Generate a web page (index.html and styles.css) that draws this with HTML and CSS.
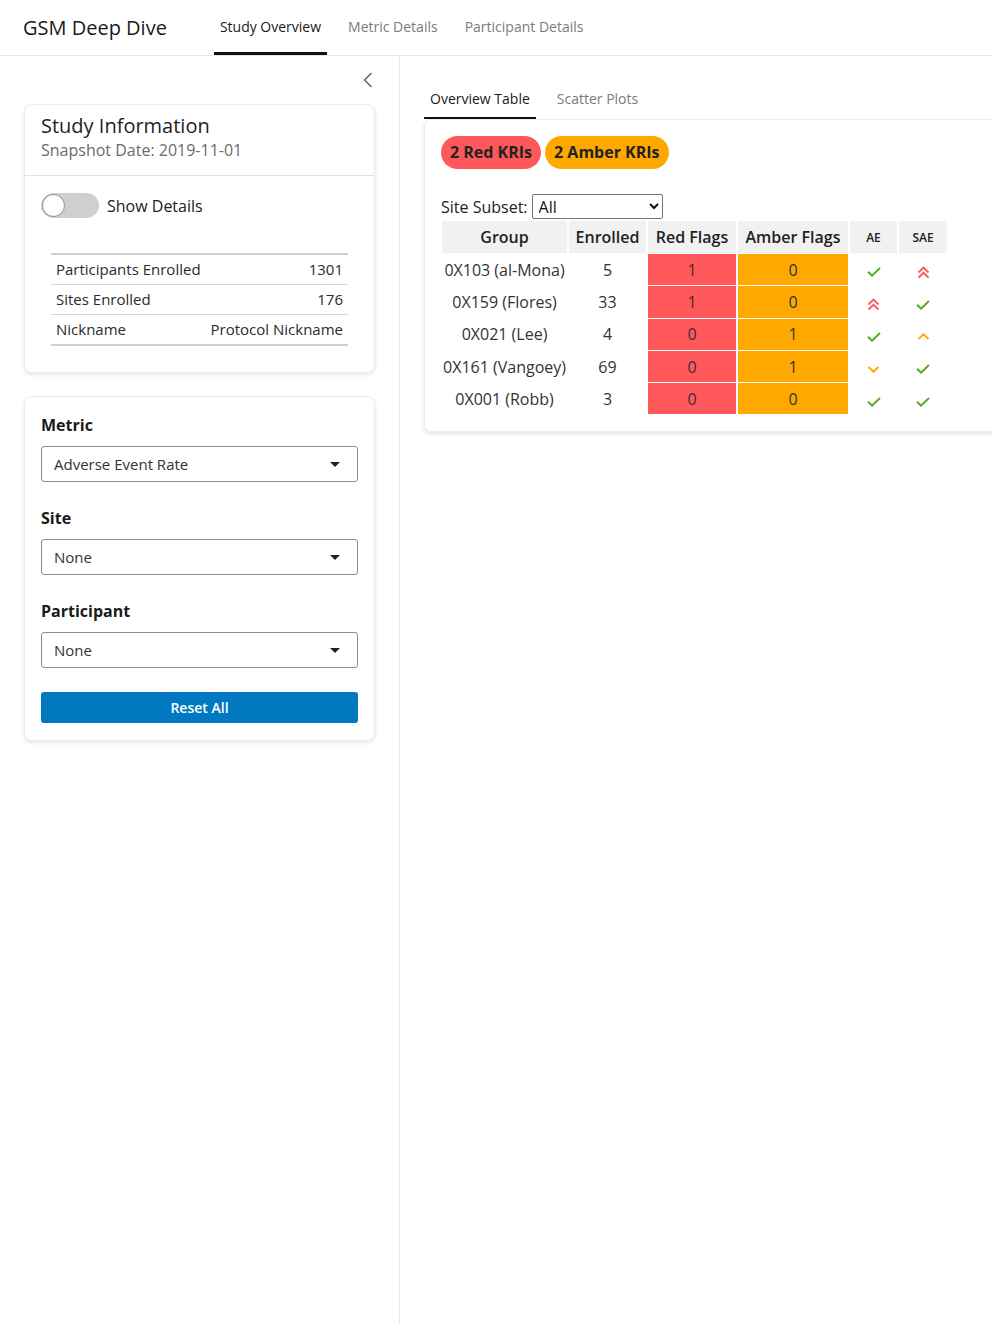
FILE: index.html
```html
<!DOCTYPE html>
<html lang="en">
<head>
<meta charset="utf-8">
<title>GSM Deep Dive</title>
<link rel="stylesheet" href="styles.css">
</head>
<body>
<header class="navbar">
  <div class="brand">GSM Deep Dive</div>
  <nav class="top-tabs">
    <a class="top-tab active">Study Overview</a>
    <a class="top-tab">Metric Details</a>
    <a class="top-tab">Participant Details</a>
  </nav>
</header>
<div class="layout">
  <aside class="sidebar">
    <div class="collapse-row">
      <svg class="collapse-icon" width="10" height="16" viewBox="0 0 10 16"><path d="M8.5 1 L1.5 8 L8.5 15" fill="none" stroke="#555" stroke-width="1.2"/></svg>
    </div>
    <section class="card info-card">
      <div class="card-header">
        <div class="card-title">Study Information</div>
        <div class="card-subtitle">Snapshot Date: 2019-11-01</div>
      </div>
      <div class="card-body">
        <div class="toggle-row">
          <span class="switch"><span class="knob"></span></span>
          <span class="toggle-label">Show Details</span>
        </div>
        <table class="info-table">
          <tr><td>Participants Enrolled</td><td class="num">1301</td></tr>
          <tr><td>Sites Enrolled</td><td class="num">176</td></tr>
          <tr><td>Nickname</td><td class="num">Protocol Nickname</td></tr>
        </table>
      </div>
    </section>
    <section class="card filter-card">
      <div class="field">
        <div class="field-label">Metric</div>
        <div class="dropdown"><span>Adverse Event Rate</span><span class="caret"></span></div>
      </div>
      <div class="field">
        <div class="field-label">Site</div>
        <div class="dropdown"><span>None</span><span class="caret"></span></div>
      </div>
      <div class="field">
        <div class="field-label">Participant</div>
        <div class="dropdown"><span>None</span><span class="caret"></span></div>
      </div>
      <button class="reset-btn">Reset All</button>
    </section>
  </aside>
  <main class="main">
    <nav class="sub-tabs">
      <a class="sub-tab active">Overview Table</a>
      <a class="sub-tab">Scatter Plots</a>
    </nav>
    <section class="overview-card">
      <div class="badges">
        <span class="badge red">2 Red KRIs</span>
        <span class="badge amber">2 Amber KRIs</span>
      </div>
      <div class="subset-row">
        <label class="subset-label">Site Subset:</label>
        <select class="subset-select"><option>All</option></select>
      </div>
      <table class="kri-table">
        <colgroup>
          <col class="c-group"><col class="c-enr"><col class="c-red"><col class="c-amber"><col class="c-ae"><col class="c-sae">
        </colgroup>
        <thead>
          <tr><th>Group</th><th>Enrolled</th><th>Red Flags</th><th>Amber Flags</th><th class="small">AE</th><th class="small">SAE</th></tr>
        </thead>
        <tbody>
          <tr><td>0X103 (al-Mona)</td><td>5</td><td class="red-cell">1</td><td class="amber-cell">0</td>
            <td><svg class="ic" width="14" height="10" viewBox="0 0 14 10"><path d="M1 4.8 L5 8.6 L13 1" class="chk"/></svg></td>
            <td><svg class="ic" width="13" height="13" viewBox="0 0 13 13"><path d="M1.5 6.5 L6.5 1.6 L11.5 6.5 M1.5 11.6 L6.5 6.7 L11.5 11.6" class="red-s"/></svg></td></tr>
          <tr><td>0X159 (Flores)</td><td>33</td><td class="red-cell">1</td><td class="amber-cell">0</td>
            <td><svg class="ic" width="13" height="13" viewBox="0 0 13 13"><path d="M1.5 6.5 L6.5 1.6 L11.5 6.5 M1.5 11.6 L6.5 6.7 L11.5 11.6" class="red-s"/></svg></td>
            <td><svg class="ic" width="14" height="10" viewBox="0 0 14 10"><path d="M1 4.8 L5 8.6 L13 1" class="chk"/></svg></td></tr>
          <tr><td>0X021 (Lee)</td><td>4</td><td class="red-cell">0</td><td class="amber-cell">1</td>
            <td><svg class="ic" width="14" height="10" viewBox="0 0 14 10"><path d="M1 4.8 L5 8.6 L13 1" class="chk"/></svg></td>
            <td><svg class="ic" width="13" height="7" viewBox="0 0 13 7"><path d="M1.5 6 L6.5 1.3 L11.5 6" class="amb-s"/></svg></td></tr>
          <tr><td>0X161 (Vangoey)</td><td>69</td><td class="red-cell">0</td><td class="amber-cell">1</td>
            <td><svg class="ic" width="13" height="7" viewBox="0 0 13 7"><path d="M1.5 1 L6.5 5.7 L11.5 1" class="amb-s"/></svg></td>
            <td><svg class="ic" width="14" height="10" viewBox="0 0 14 10"><path d="M1 4.8 L5 8.6 L13 1" class="chk"/></svg></td></tr>
          <tr><td>0X001 (Robb)</td><td>3</td><td class="red-cell">0</td><td class="amber-cell">0</td>
            <td><svg class="ic" width="14" height="10" viewBox="0 0 14 10"><path d="M1 4.8 L5 8.6 L13 1" class="chk"/></svg></td>
            <td><svg class="ic" width="14" height="10" viewBox="0 0 14 10"><path d="M1 4.8 L5 8.6 L13 1" class="chk"/></svg></td></tr>
        </tbody>
      </table>
    </section>
  </main>
</div>
</body>
</html>
```
FILE: styles.css
```css
* { box-sizing: border-box; }
html, body { margin: 0; padding: 0; overflow: hidden; }
body {
  font-family: "Open Sans", "Noto Sans", sans-serif;
  color: #222;
  background: #fff;
  width: 992px;
  height: 1323px;
}

/* top navbar */
.navbar {
  display: flex;
  align-items: stretch;
  height: 56px;
  border-bottom: 1px solid #e6e6e6;
  padding-left: 23px;
}
.brand {
  font-size: 20px;
  line-height: 55px;
  color: #1a1a1a;
}
.top-tabs {
  display: flex;
  gap: 15px;
  margin-left: 47px;
}
.top-tab {
  display: block;
  height: 55px;
  padding: 0 6px;
  line-height: 54px;
  font-size: 14px;
  color: #7b7b7b;
  border-bottom: 3px solid transparent;
}
.top-tab.active {
  color: #1a1a1a;
  border-bottom-color: #111;
}

.layout {
  display: flex;
  height: 1267px;
}

/* sidebar */
.sidebar {
  width: 400px;
  flex: none;
  border-right: 1px solid #e6e6e6;
  padding: 0 24px;
}
.collapse-row {
  height: 48px;
  display: flex;
  justify-content: flex-end;
  align-items: center;
  padding-right: 2px;
}
.collapse-icon { display: block; }

.card {
  background: #fff;
  border: 1px solid #ececec;
  border-radius: 8px;
  box-shadow: 0 2px 4px rgba(0,0,0,0.10);
}
.info-card { margin-bottom: 23px; }
.card-header {
  padding: 9px 16px 13px;
  border-bottom: 1px solid #e3e3e3;
}
.card-title {
  font-size: 20px;
  line-height: 24px;
  color: #1e1e1e;
}
.card-subtitle {
  font-size: 16px;
  line-height: 24px;
  color: #6b6b6b;
}
.card-body {
  padding: 17px 16px 26px;
}
.toggle-row {
  display: flex;
  align-items: center;
  gap: 8px;
  height: 25px;
  margin-bottom: 35px;
}
.switch {
  position: relative;
  width: 58px;
  height: 25px;
  border-radius: 13px;
  background: #cfcfcf;
  flex: none;
}
.knob {
  position: absolute;
  left: 1px;
  top: 1px;
  width: 23px;
  height: 23px;
  border-radius: 50%;
  background: #fff;
  border: 1.5px solid #8f8f8f;
}
.toggle-label {
  font-size: 16px;
  color: #222;
}
.info-table {
  width: calc(100% - 20px);
  margin: 0 10px;
  border-collapse: collapse;
  border-top: 2px solid #cfcfcf;
  border-bottom: 2px solid #cfcfcf;
  font-size: 15px;
  color: #2b2b2b;
}
.info-table td {
  line-height: 29px;
  padding: 0 5px;
  border-top: 1px solid #d6d6d6;
  vertical-align: middle;
}
.info-table tr:first-child td { border-top: none; }
.info-table .num { text-align: right; }

.filter-card {
  padding: 16px 16px 17px;
}
.field { margin-bottom: 24px; }
.field-label {
  font-size: 16px;
  font-weight: 700;
  line-height: 24px;
  margin-bottom: 9px;
  color: #1a1a1a;
}
.dropdown {
  display: flex;
  align-items: center;
  justify-content: space-between;
  height: 36px;
  padding: 0 17px 0 12px;
  border: 1px solid #8d8d8d;
  border-radius: 3px;
  font-size: 15px;
  color: #333;
}
.caret {
  width: 0;
  height: 0;
  border-left: 5px solid transparent;
  border-right: 5px solid transparent;
  border-top: 5px solid #222;
}
.reset-btn {
  display: block;
  width: 100%;
  height: 31px;
  margin-top: 24px;
  border: none;
  border-radius: 3px;
  background: #0079c1;
  color: #fff;
  font-family: "Open Sans", sans-serif;
  font-size: 14px;
  font-weight: 600;
}

/* main */
.main {
  flex: 1;
  padding: 24px 0 0 24px;
  overflow: hidden;
  min-width: 0;
}
.sub-tabs {
  display: flex;
  gap: 15px;
  height: 39px;
}
.sub-tab {
  display: block;
  height: 39px;
  padding: 0 6px;
  line-height: 38px;
  font-size: 14px;
  color: #7b7b7b;
  border-bottom: 2px solid transparent;
}
.sub-tab.active {
  color: #1a1a1a;
  border-bottom-color: #111;
}
.overview-card {
  width: 640px;
  border: 1px solid #ececec;
  border-radius: 7px;
  box-shadow: 0 2px 4px rgba(0,0,0,0.12);
  padding: 16px 16px 16px;
}
.badges {
  display: flex;
  gap: 4px;
}
.badge {
  display: inline-block;
  height: 33px;
  line-height: 33px;
  padding: 0 9px;
  border-radius: 17px;
  font-size: 16px;
  font-weight: 700;
  color: #222;
}
.badge.red { background: #ff585a; }
.badge.amber { background: #ffa900; }

.subset-row {
  display: flex;
  align-items: center;
  gap: 4px;
  margin-top: 25px;
  height: 25px;
}
.subset-label {
  font-size: 16px;
  color: #222;
}
.subset-select {
  width: 131px;
  height: 25px;
  font-family: "Open Sans", sans-serif;
  font-size: 16px;
  color: #111;
  border: 1px solid #767676;
  border-radius: 2px;
  background: #fff;
  padding: 0 2px;
}

.kri-table {
  margin-top: 1px;
  margin-left: -1px;
  border-collapse: separate;
  border-spacing: 2px 1px;
  table-layout: fixed;
  width: 509px;
  font-size: 16px;
  color: #333;
  text-align: center;
}
.c-group { width: 125px; }
.c-enr { width: 77px; }
.c-red { width: 88px; }
.c-amber { width: 110px; }
.c-ae { width: 47px; }
.c-sae { width: 48px; }
.kri-table th {
  height: 32px;
  background: #f1f1f1;
  font-weight: 600;
  color: #222;
  padding: 0;
  white-space: nowrap;
}
.kri-table th.small {
  font-size: 12px;
  font-weight: 600;
}
.kri-table td {
  height: 31.3px;
  padding: 0;
  white-space: nowrap;
  vertical-align: middle;
}
.kri-table td.red-cell { background: #ff585a; }
.kri-table td.amber-cell { background: #ffa900; }
.ic { display: inline-block; vertical-align: middle; margin-top: 2px; }
.chk { fill: none; stroke: #4faf1c; stroke-width: 2; }
.red-s { fill: none; stroke: #ff5a5c; stroke-width: 2; }
.amb-s { fill: none; stroke: #ffa900; stroke-width: 2; }
```
